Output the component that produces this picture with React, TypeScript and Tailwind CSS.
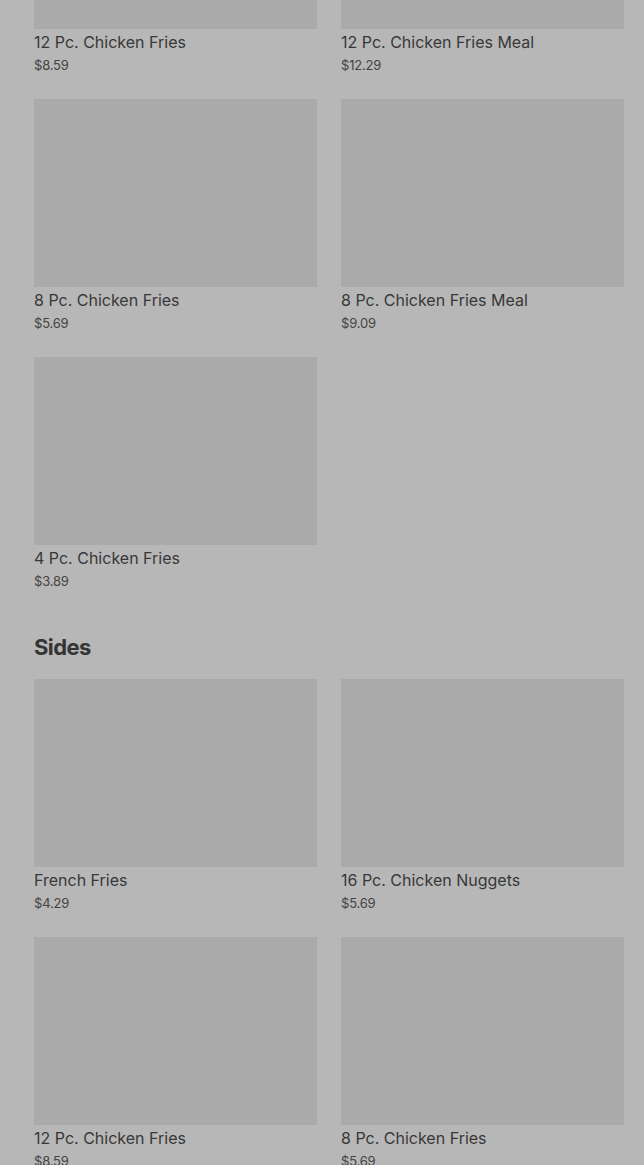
import React from "react";

type Item = { name: string; price: string };

const topItems: Item[] = [
  { name: "12 Pc. Chicken Fries", price: "$8.59" },
  { name: "12 Pc. Chicken Fries Meal", price: "$12.29" },
  { name: "8 Pc. Chicken Fries", price: "$5.69" },
  { name: "8 Pc. Chicken Fries Meal", price: "$9.09" },
  { name: "4 Pc. Chicken Fries", price: "$3.89" },
];

const sides: Item[] = [
  { name: "French Fries", price: "$4.29" },
  { name: "16 Pc. Chicken Nuggets", price: "$5.69" },
  { name: "12 Pc. Chicken Fries", price: "$8.59" },
  { name: "8 Pc. Chicken Fries", price: "$5.69" },
];

function Card({ item }: { item: Item }) {
  return (
    <div className="flex flex-col">
      <div className="h-[188px] w-full bg-[#aaaaaa]" />
      <div className="text-[16px] leading-[24px] text-[#383838] mt-[1px]">{item.name}</div>
      <div className="text-[13px] leading-[20px] text-[#444444] tracking-[-0.2px] mt-[1px]">{item.price}</div>
    </div>
  );
}

export default function App() {
  return (
    <div
      className="w-[644px] h-[1165px] overflow-hidden bg-[#b7b7b7]"
      style={{ fontFamily: "Inter, Roboto, 'Liberation Sans', sans-serif" }}
    >
      <div className="pl-[34px] pr-[20px] mt-[-159px]">
        <div className="grid grid-cols-2 gap-x-[24px] gap-y-[24px]">
          {topItems.map((it, i) => (
            <Card key={i} item={it} />
          ))}
        </div>
        <h2 className="mt-[42px] mb-[18px] text-[22px] leading-[28px] font-bold text-[#353535] tracking-[-0.6px]">
          Sides
        </h2>
        <div className="grid grid-cols-2 gap-x-[24px] gap-y-[24px]">
          {sides.map((it, i) => (
            <Card key={i} item={it} />
          ))}
        </div>
      </div>
    </div>
  );
}
